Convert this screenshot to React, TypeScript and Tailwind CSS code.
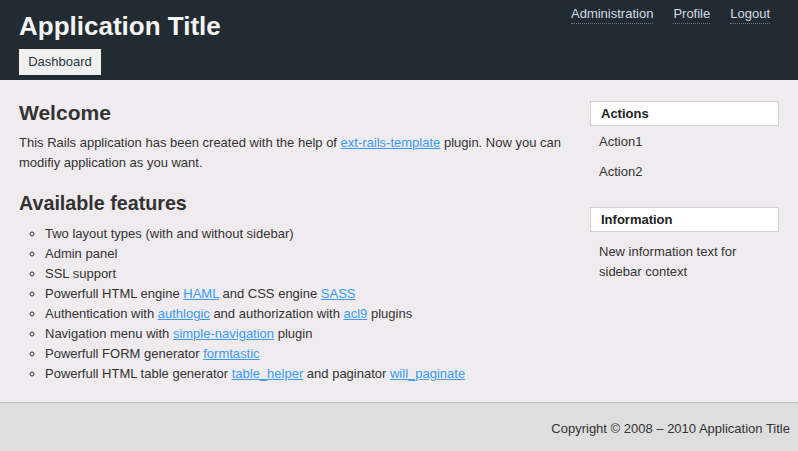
import React from 'react';

export default function App() {
  const link = 'text-[#3b9af2] underline';
  return (
    <div className="min-h-[451px] flex flex-col bg-[#efebee] text-[13px] text-[#333] font-['Liberation_Sans',Arial,sans-serif]">
      {/* Header */}
      <div className="h-[80px] bg-[#222b31] flex justify-between pl-[19px] pr-[28px]">
        <div className="flex flex-col">
          <h1 className="text-[26px] leading-none font-bold text-[#f4f4f4] mt-[13px]">Application Title</h1>
          <div className="mt-[10px] h-[26px] w-[82px] bg-[#f0f0f0] text-[#2a3540] flex items-center justify-center">Dashboard</div>
        </div>
        <div className="flex gap-[20px] mt-[6px] h-[18px] text-[#d3dbe3]">
          <a className="border-b border-dotted border-[#6b7680] leading-[16px]">Administration</a>
          <a className="border-b border-dotted border-[#6b7680] leading-[16px]">Profile</a>
          <a className="border-b border-dotted border-[#6b7680] leading-[16px]">Logout</a>
        </div>
      </div>

      {/* Body */}
      <div className="flex-1 flex px-[19px] pt-[21px] gap-[21px]">
        <div className="flex-1">
          <h2 className="text-[21px] leading-[24px] font-bold">Welcome</h2>
          <p className="mt-[8px] leading-[20px]">
            This Rails application has been created with the help of <a className={link}>ext-rails-template</a> plugin. Now you can modifiy application as you want.
          </p>
          <h2 className="mt-[18px] text-[19.7px] leading-[24px] font-bold">Available features</h2>
          <ul className="mt-[9px] pl-[26px] list-[circle] leading-[20px]">
            <li>Two layout types (with and without sidebar)</li>
            <li>Admin panel</li>
            <li>SSL support</li>
            <li>Powerfull HTML engine <a className={link}>HAML</a> and CSS engine <a className={link}>SASS</a></li>
            <li>Authentication with <a className={link}>authlogic</a> and authorization with <a className={link}>acl9</a> plugins</li>
            <li>Navigation menu with <a className={link}>simple-navigation</a> plugin</li>
            <li>Powerfull FORM generator <a className={link}>formtastic</a></li>
            <li>Powerfull HTML table generator <a className={link}>table_helper</a> and paginator <a className={link}>will_paginate</a></li>
          </ul>
        </div>
        <div className="w-[189px] shrink-0">
          <div className="h-[25px] bg-white border border-[#d0d0d0] pl-[10px] flex items-center font-bold text-[#222]">Actions</div>
          <div className="pl-[9px] mt-[6px] leading-[20px]">Action1</div>
          <div className="pl-[9px] mt-[10px] leading-[20px]">Action2</div>
          <div className="mt-[25px] h-[25px] bg-white border border-[#d0d0d0] pl-[10px] flex items-center font-bold text-[#222]">Information</div>
          <div className="pl-[9px] mt-[10px] leading-[20px]">New information text for<br />sidebar context</div>
        </div>
      </div>

      {/* Footer */}
      <div className="h-[49px] mt-[17px] border-t border-[#bdbdbd] bg-[#dedede] flex items-center justify-end pr-[8px] pt-[3px]">
        Copyright © 2008 – 2010 Application Title
      </div>
    </div>
  );
}
